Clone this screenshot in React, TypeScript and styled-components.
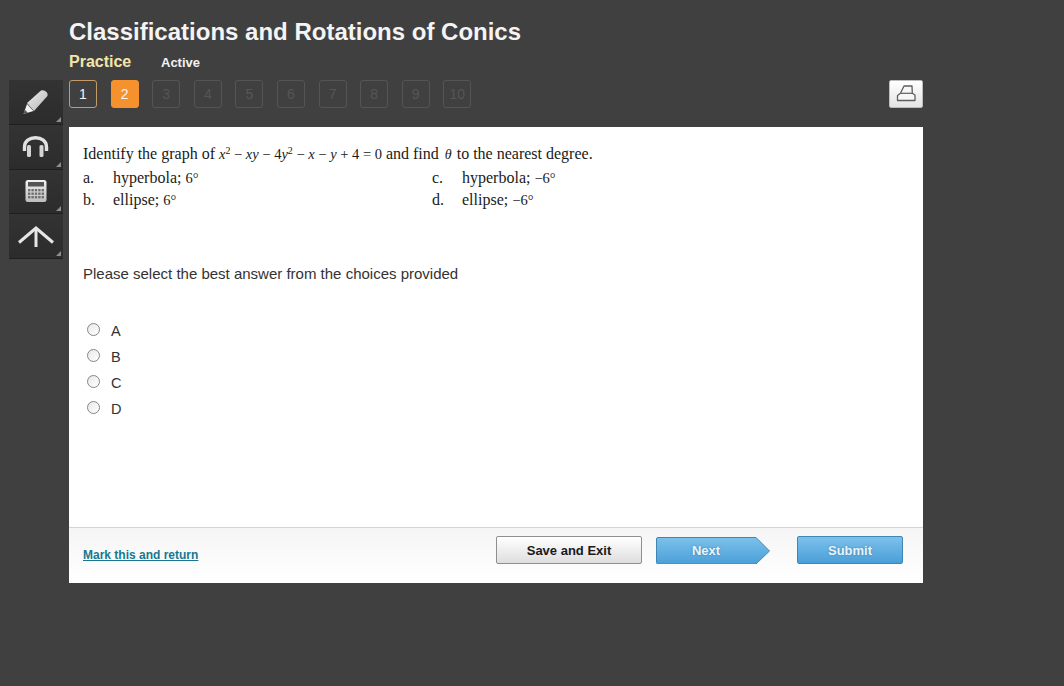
import React from "react";
import styled, { createGlobalStyle } from "styled-components";

const Global = createGlobalStyle`
  html, body { margin: 0; padding: 0; background: #404040; }
  body { font-family: "Liberation Sans", Arial, sans-serif; }
`;

const Page = styled.div`
  width: 1064px;
  height: 686px;
  background: #404040;
  overflow: hidden;
  display: grid;
  grid-template-columns: 54px 854px;
  grid-template-rows: 80px auto;
  column-gap: 6px;
  padding-left: 9px;
  box-sizing: border-box;
`;

const Header = styled.header`
  grid-column: 2;
  grid-row: 1;
  display: flex;
  flex-direction: column;
  padding-top: 18px;
`;

const Title = styled.h1`
  margin: 0;
  font-size: 24px;
  line-height: 28px;
  font-weight: 700;
  color: #f4f4f4;
`;

const StatusRow = styled.div`
  display: flex;
  align-items: baseline;
  margin-top: 7px;
`;

const Mode = styled.span`
  font-size: 16px;
  line-height: 18px;
  font-weight: 700;
  color: #f3e5ab;
  width: 92px;
`;

const State = styled.span`
  font-size: 13px;
  font-weight: 700;
  color: #f2f2f2;
`;

const Rail = styled.nav`
  grid-column: 1;
  grid-row: 2;
  display: flex;
  flex-direction: column;
  width: 54px;
`;

const RailButton = styled.button`
  position: relative;
  width: 54px;
  height: 44.75px;
  padding: 0;
  border: 0;
  border-bottom: 1px solid #1f1f1f;
  background: linear-gradient(#333333, #2c2c2c);
  display: flex;
  align-items: center;
  justify-content: center;
  &::after {
    content: "";
    position: absolute;
    right: 2px;
    bottom: 2px;
    border-style: solid;
    border-width: 0 0 5px 5px;
    border-color: transparent transparent #8d8d8d transparent;
  }
`;

const Main = styled.div`
  grid-column: 2;
  grid-row: 2;
  display: flex;
  flex-direction: column;
`;

const PagerRow = styled.div`
  display: flex;
  align-items: flex-start;
  justify-content: space-between;
  height: 47px;
`;

const Pager = styled.div`
  display: flex;
  gap: 13.6px;
`;

const PageChip = styled.div<{ $kind: "done" | "current" | "locked" }>`
  width: 28px;
  height: 28px;
  box-sizing: border-box;
  border-radius: 3px;
  display: flex;
  align-items: center;
  justify-content: center;
  font-size: 14px;
  color: ${(p) => (p.$kind === "locked" ? "#565656" : "#f5f5f5")};
  background: ${(p) => (p.$kind === "current" ? "#f6922e" : "transparent")};
  border: 1px solid
    ${(p) =>
      p.$kind === "locked" ? "#555555" : p.$kind === "current" ? "#f6922e" : "#c49a67"};
`;

const PrintButton = styled.button`
  width: 34px;
  height: 28px;
  padding: 0;
  border: 1px solid #bdbdbd;
  border-radius: 2px;
  background: linear-gradient(#ffffff, #e4e4e4);
  display: flex;
  align-items: center;
  justify-content: center;
`;

const Sheet = styled.section`
  width: 854px;
  height: 456px;
  background: #fff;
  display: flex;
  flex-direction: column;
`;

const Body = styled.div`
  flex: 1;
  padding: 17px 14px 0;
`;

const Question = styled.div`
  font-family: "Liberation Serif", "Times New Roman", serif;
  font-size: 16px;
  line-height: 20px;
  color: #1a1a1a;
`;

const MathText = styled.span`
  font-size: 14.5px;
  i { font-style: italic; }
  sup { font-size: 10px; line-height: 0; vertical-align: 5px; }
`;

const Theta = styled.i`
  font-size: 14px;
  margin: 0 1px 0 2px;
`;

const Options = styled.div`
  display: grid;
  grid-template-columns: 349px 1fr;
  grid-auto-rows: 22px;
  margin-top: 2px;
`;

const Option = styled.div`
  display: grid;
  grid-template-columns: 30px 1fr;
  line-height: 22px;
`;

const Prompt = styled.p`
  margin: 54px 0 0;
  font-size: 15px;
  line-height: 18px;
  color: #333;
`;

const Choices = styled.div`
  display: flex;
  flex-direction: column;
  margin-top: 34px;
`;

const Choice = styled.label`
  display: flex;
  align-items: center;
  box-sizing: border-box;
  height: 26px;
  padding-top: 2px;
  font-size: 14.5px;
  color: #333;
`;

const RadioMark = styled.span`
  width: 13px;
  height: 13px;
  box-sizing: border-box;
  border: 1px solid #858585;
  border-radius: 50%;
  background: linear-gradient(135deg, #e8e8e8, #ffffff);
  margin: 0 11px 0 4px;
  position: relative;
  top: -2px;
`;

const Footer = styled.footer`
  height: 56px;
  box-sizing: border-box;
  border-top: 1px solid #d4d4d4;
  background: linear-gradient(#f5f5f5, #ffffff);
  display: flex;
  align-items: flex-start;
  padding: 8px 20px 0 14px;
`;

const MarkLink = styled.a`
  font-size: 12px;
  font-weight: 700;
  color: #17788f;
  text-decoration: underline;
  margin-top: 12px;
  margin-right: 297px;
  white-space: nowrap;
  width: 116px;
`;

const SaveButton = styled.button`
  width: 146px;
  height: 28px;
  border: 1px solid #8f8f8f;
  border-radius: 2px;
  background: linear-gradient(#ffffff, #dedede);
  font: 700 13px "Liberation Sans", Arial, sans-serif;
  color: #1a1a1a;
  padding: 0;
  margin-right: 14px;
`;

const NextWrap = styled.div`
  position: relative;
  width: 114px;
  height: 28px;
  margin-right: 27px;
  font: 700 13px "Liberation Sans", Arial, sans-serif;
  color: #eaf4fb;
  text-shadow: 0 0 2px #3f7fa8;
`;

const NextLabel = styled.span`
  position: absolute;
  left: 0;
  top: 0;
  width: 100px;
  line-height: 30px;
  text-align: center;
`;

const SubmitButton = styled.button`
  width: 106px;
  height: 28px;
  border: 1px solid #3f86b4;
  border-radius: 2px;
  background: linear-gradient(#7cc1ec, #4a9fd8);
  font: 700 13px "Liberation Sans", Arial, sans-serif;
  color: #eaf4fb;
  text-shadow: 0 0 2px #3f7fa8;
  padding: 0;
`;

const Pencil = () => (
  <svg width="30" height="30" viewBox="0 0 30 30">
    <defs>
      <linearGradient id="pen" x1="0" y1="0" x2="1" y2="1">
        <stop offset="0" stopColor="#ececec" />
        <stop offset="1" stopColor="#b8b8b8" />
      </linearGradient>
    </defs>
    <path d="M6 16 L20 3.5 Q23 2.5 25.5 5 Q27.5 7.5 26 9.5 L13 24 Z" fill="url(#pen)" />
    <path d="M6 17 L12.5 24 L2.5 27 Z" fill="#f2f2f2" />
    <path d="M2.5 27 L3.8 22.8 L6.8 25.8 Z" fill="#555" />
  </svg>
);

const Headphones = () => (
  <svg width="30" height="30" viewBox="0 0 30 30">
    <path d="M3.5 19 V15 C3.5 9 8.5 5.8 14.5 5.8 C20.5 5.8 25.5 9 25.5 15 V19" fill="none" stroke="#e2e2e2" strokeWidth="3.4" />
    <rect x="6" y="13" width="4" height="12" rx="1.6" fill="#d4d4d4" />
    <rect x="18.5" y="13" width="4" height="12" rx="1.6" fill="#d4d4d4" />
  </svg>
);

const Calculator = () => (
  <svg width="24" height="24" viewBox="0 0 24 24">
    <defs>
      <linearGradient id="calc" x1="0" y1="0" x2="0" y2="1">
        <stop offset="0" stopColor="#f2f2f2" />
        <stop offset="1" stopColor="#bdbdbd" />
      </linearGradient>
    </defs>
    <rect x="1.5" y="1" width="21" height="22" rx="2.5" fill="url(#calc)" />
    <rect x="4" y="3" width="16" height="4.5" fill="#555" />
    {[10, 13.5, 17].flatMap((y) =>
      [4, 7.4, 10.8, 14.2, 17.6].map((x) => (
        <rect key={`${x}-${y}`} x={x} y={y} width="2.4" height="2.4" fill="#707070" />
      ))
    )}
  </svg>
);

const Caret = () => (
  <svg width="36" height="24" viewBox="0 0 36 24">
    <path d="M1 18.5 L18 4 L35 18.5" fill="none" stroke="#e6e6e6" strokeWidth="3" />
    <path d="M18 5 V23" stroke="#e6e6e6" strokeWidth="3" />
  </svg>
);

const Printer = () => (
  <svg width="22" height="18" viewBox="0 0 22 18">
    <path
      d="M5.5 8.3 L9 1 H17 L17.3 8.3 L20 10 V15.5 H2.5 V10.5 Z"
      fill="#f6f6f6"
      stroke="#5e5e5e"
      strokeWidth="1.3"
      strokeLinejoin="round"
    />
    <path d="M5.5 8.3 H17.3" stroke="#5e5e5e" strokeWidth="1.2" />
  </svg>
);

const NextShape = () => (
  <svg width="114" height="28" viewBox="0 0 114 28">
    <defs>
      <linearGradient id="next" x1="0" y1="0" x2="0" y2="1">
        <stop offset="0" stopColor="#7cc1ec" />
        <stop offset="1" stopColor="#4a9fd8" />
      </linearGradient>
    </defs>
    <path
      d="M2 1.5 H100 L113.5 15 L100 28 H2 Q.5 28 .5 26.5 V3 Q.5 1.5 2 1.5 Z"
      fill="url(#next)"
      stroke="#3f86b4"
    />
  </svg>
);

const pages = Array.from({ length: 10 }, (_, i) => i + 1);

export default function App() {
  return (
    <Page>
      <Global />
      <Header>
        <Title>Classifications and Rotations of Conics</Title>
        <StatusRow>
          <Mode>Practice</Mode>
          <State>Active</State>
        </StatusRow>
      </Header>
      <Rail>
        <RailButton aria-label="Pencil"><Pencil /></RailButton>
        <RailButton aria-label="Audio"><Headphones /></RailButton>
        <RailButton aria-label="Calculator"><Calculator /></RailButton>
        <RailButton aria-label="Formula"><Caret /></RailButton>
      </Rail>
      <Main>
        <PagerRow>
          <Pager>
            {pages.map((n) => (
              <PageChip key={n} $kind={n === 1 ? "done" : n === 2 ? "current" : "locked"}>
                {n}
              </PageChip>
            ))}
          </Pager>
          <PrintButton aria-label="Print"><Printer /></PrintButton>
        </PagerRow>
        <Sheet>
          <Body>
            <Question>
              <div>
                Identify the graph of{" "}
                <MathText>
                  <i>x</i><sup>2</sup> − <i>xy</i> − 4<i>y</i><sup>2</sup> − <i>x</i> − <i>y</i> + 4 = 0
                </MathText>{" "}
                and find <Theta>θ</Theta> to the nearest degree.
              </div>
              <Options>
                <Option><span>a.</span><span>hyperbola; <MathText>6°</MathText></span></Option>
                <Option><span>c.</span><span>hyperbola; <MathText>−6°</MathText></span></Option>
                <Option><span>b.</span><span>ellipse; <MathText>6°</MathText></span></Option>
                <Option><span>d.</span><span>ellipse; <MathText>−6°</MathText></span></Option>
              </Options>
            </Question>
            <Prompt>Please select the best answer from the choices provided</Prompt>
            <Choices>
              {["A", "B", "C", "D"].map((c) => (
                <Choice key={c}><RadioMark />{c}</Choice>
              ))}
            </Choices>
          </Body>
          <Footer>
            <MarkLink>Mark this and return</MarkLink>
            <SaveButton>Save and Exit</SaveButton>
            <NextWrap>
              <NextShape />
              <NextLabel>Next</NextLabel>
            </NextWrap>
            <SubmitButton>Submit</SubmitButton>
          </Footer>
        </Sheet>
      </Main>
    </Page>
  );
}
